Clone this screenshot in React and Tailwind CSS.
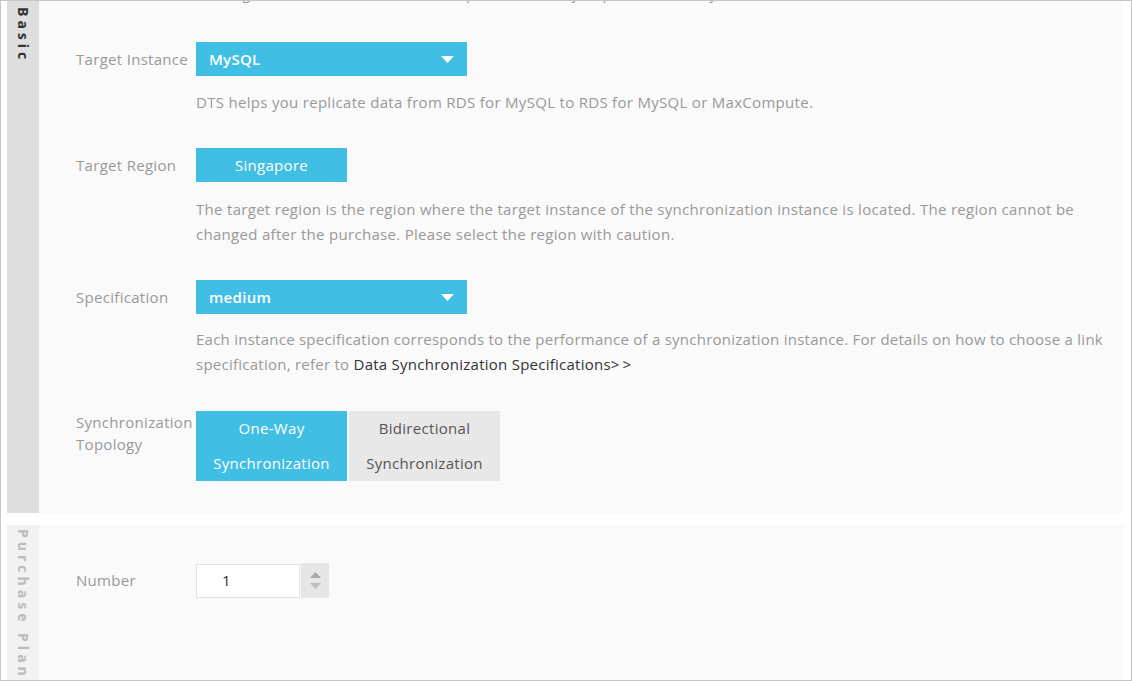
import React from "react";

function Caret() {
  return (
    <svg width="13" height="7" viewBox="0 0 13 7" className="shrink-0">
      <polygon points="0,0 13,0 6.5,7" fill="#ffffff" />
    </svg>
  );
}

function Row({ label, labelClass = "leading-[34px]", mt, children }) {
  return (
    <div className={"flex " + mt}>
      <div className={"w-[120px] shrink-0 text-[15px] tracking-[0.3px] text-[#999] " + labelClass}>{label}</div>
      <div className="flex-1">{children}</div>
    </div>
  );
}

export default function App() {
  return (
    <div className="h-[681px] w-[1132px] overflow-hidden border border-[#c6c6c6] bg-white font-['Open_Sans','Noto_Sans',sans-serif]">
      {/* Basic panel */}
      <div className="ml-[6px] mr-[8px] flex h-[512px] bg-[#fafafa]">
        <div className="flex w-[32px] shrink-0 justify-center bg-[#dedede] pt-[6px]">
          <span className="text-[14px] font-bold tracking-[4px] text-[#333] [writing-mode:vertical-rl]">Basic</span>
        </div>
        <div className="flex-1 overflow-hidden pl-[37px] pr-[16px]">
          <div className="-mt-[20px] ml-[120px] whitespace-nowrap text-[15px] leading-[25px] tracking-[0.3px] text-[#999]">
            The region of the source instance is specified when you purchase the synchronization instance.
          </div>

          <Row label="Target Instance" mt="mt-[36px]">
            <div className="flex h-[34px] w-[271px] items-center justify-between bg-[#41bee4] pl-[13px] pr-[13px] text-[15px] font-semibold tracking-[0.3px] text-white">
              <span>MySQL</span>
              <Caret />
            </div>
            <p className="mt-[14px] text-[15px] leading-[25px] tracking-[0.3px] text-[#999]">
              DTS helps you replicate data from RDS for MySQL to RDS for MySQL or MaxCompute.
            </p>
          </Row>

          <Row label="Target Region" mt="mt-[33px]">
            <div className="flex h-[34px] w-[151px] items-center justify-center bg-[#41bee4] text-[15px] tracking-[0.3px] text-white">
              Singapore
            </div>
            <p className="mt-[15px] text-[15px] leading-[25px] tracking-[0.3px] text-[#999]">
              The target region is the region where the target instance of the synchronization instance is located. The region cannot be changed after the purchase. Please select the region with caution.
            </p>
          </Row>

          <Row label="Specification" mt="mt-[33px]">
            <div className="flex h-[34px] w-[271px] items-center justify-between bg-[#41bee4] pl-[13px] pr-[13px] text-[15px] font-semibold tracking-[0.3px] text-white">
              <span>medium</span>
              <Caret />
            </div>
            <p className="mt-[13px] text-[15px] leading-[25px] tracking-[0.25px] text-[#999]">
              Each instance specification corresponds to the performance of a synchronization instance. For details on how to choose a link specification, refer to{" "}
              <span className="text-[#333]">Data Synchronization Specifications<span className="tracking-[3px]">&gt;&gt;</span></span>
            </p>
          </Row>

          <Row label="Synchronization Topology" labelClass="leading-[22px]" mt="mt-[34px]">
            <div className="flex gap-[2px]">
              <div className="flex h-[70px] w-[151px] flex-col items-center justify-center bg-[#41bee4] text-[15px] leading-[35px] tracking-[0.3px] text-white">
                <span>One-Way</span>
                <span>Synchronization</span>
              </div>
              <div className="flex h-[70px] w-[151px] flex-col items-center justify-center bg-[#e8e8e8] text-[15px] leading-[35px] tracking-[0.3px] text-[#555]">
                <span>Bidirectional</span>
                <span>Synchronization</span>
              </div>
            </div>
          </Row>
        </div>
      </div>

      {/* Purchase Plan panel */}
      <div className="ml-[6px] mr-[8px] mt-[12px] flex h-[200px] bg-[#fafafa]">
        <div className="flex w-[32px] shrink-0 justify-center bg-[#f2f2f2] pt-[4px]">
          <span className="whitespace-nowrap text-[14px] font-bold tracking-[4px] text-[#bbb] [writing-mode:vertical-rl]">Purchase Plan</span>
        </div>
        <div className="flex-1 pl-[37px] pt-[38px]">
          <div className="flex items-center">
            <div className="w-[120px] shrink-0 text-[15px] tracking-[0.3px] text-[#999]">Number</div>
            <div className="flex h-[34px] w-[104px] items-center border border-[#e2e2e2] bg-white pl-[25px] text-[15px] text-[#333]">
              1
            </div>
            <div className="ml-[1px] flex h-[35px] w-[28px] flex-col items-center justify-center gap-[5px] bg-[#e6e6e6]">
              <svg width="11" height="6" viewBox="0 0 11 6">
                <polygon points="0,6 11,6 5.5,0" fill="#a8a8a8" />
              </svg>
              <svg width="11" height="6" viewBox="0 0 11 6">
                <polygon points="0,0 11,0 5.5,6" fill="#bdbdbd" />
              </svg>
            </div>
          </div>
        </div>
      </div>
    </div>
  );
}
